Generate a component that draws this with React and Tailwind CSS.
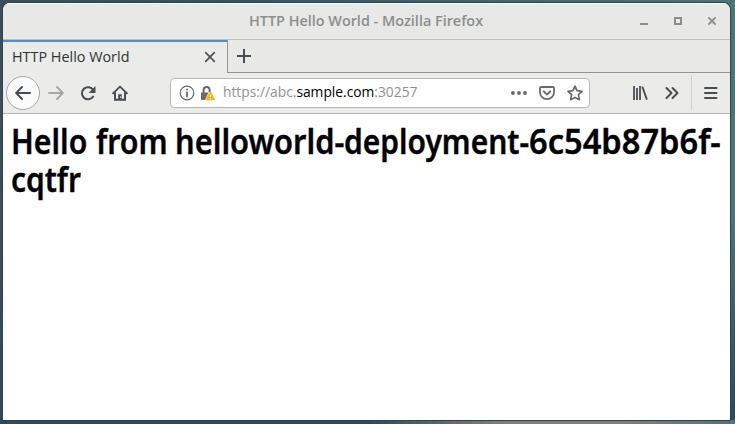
import { useLayoutEffect, useRef, useState } from "react";

// Condenses a line of text horizontally so that it fills the given width.
function Fit({ width, className = "", children }) {
  const ref = useRef(null);
  const [scale, setScale] = useState(1);
  useLayoutEffect(() => {
    setScale(width / ref.current.offsetWidth);
  }, [width]);
  return (
    <span className="block shrink-0" style={{ width }}>
      <span
        ref={ref}
        className={`inline-block origin-left align-top whitespace-nowrap ${className}`}
        style={{ transform: `scaleX(${scale})` }}
      >
        {children}
      </span>
    </span>
  );
}

function Icon({ size = 16, className = "", children }) {
  return (
    <svg
      width={size}
      height={size}
      viewBox={`0 0 ${size} ${size}`}
      fill="none"
      stroke="currentColor"
      strokeWidth="2"
      strokeLinecap="round"
      strokeLinejoin="round"
      className={`block shrink-0 ${className}`}
    >
      {children}
    </svg>
  );
}

function TitleBar() {
  return (
    <div className="flex h-[37px] shrink-0 items-center border-t border-b border-t-[#f8f8f7] border-b-[#bfbfbd] bg-[#e8e8e6] pl-[246px] text-[#8b8e8f]">
      <Fit width={234} className="pb-[2px] text-[15px] leading-[20px] font-semibold">
        HTTP Hello World - Mozilla Firefox
      </Fit>
      <div className="ml-[153px] flex gap-[18px]">
        <Icon className="text-[#8b8e8f]">
          <path d="M4 10h8" strokeLinecap="butt" />
        </Icon>
        <Icon>
          <path d="M5 4h6v6h-6z" strokeLinejoin="miter" />
        </Icon>
        <Icon>
          <path d="M4.4 3.4l7.2 7.2M11.6 3.4l-7.2 7.2" strokeLinecap="butt" />
        </Icon>
      </div>
    </div>
  );
}

function TabBar() {
  return (
    <div className="flex h-[33px] shrink-0 bg-[#e8e8e6]">
      <div className="flex w-[225px] items-center border-t-2 border-r border-t-[#4a90d9] border-r-[#939391] bg-[#ebebea] pl-[9px] text-[#2e3436]">
        <Fit width={117} className="pb-[3px] text-[15px] leading-[20px]">
          HTTP Hello World
        </Fit>
        <Icon className="-mt-[2px] ml-[73px] text-[#4b5255]">
          <path d="M3.7 3.7l8.6 8.6M12.3 3.7l-8.6 8.6" strokeWidth="1.7" />
        </Icon>
      </div>
      <div className="flex flex-1 items-center border-b border-[#939391] pl-[8px] text-[#474e51]">
        <Icon>
          <path d="M8 1v14M1 8h14" strokeLinecap="butt" />
        </Icon>
      </div>
    </div>
  );
}

function UrlBar() {
  return (
    <div className="ml-[42px] flex h-[30px] w-[420px] shrink-0 items-center rounded-[4px] border border-[#b6b6b4] bg-white pl-[8px] text-[#68696b]">
      <Icon>
        <circle cx="8" cy="8" r="6.8" strokeWidth="1.2" />
        <path d="M8 7.3v4.2" strokeWidth="1.8" />
        <circle cx="8" cy="4.6" r="1" fill="currentColor" stroke="none" />
      </Icon>
      <Icon className="ml-[5px]">
        <path d="M3.6 8V5a3 3 0 0 1 6 0v2.2" strokeLinecap="butt" />
        <path d="M1 7.5h7.5L5 15H2a1 1 0 0 1-1-1z" fill="currentColor" stroke="none" />
        <path d="M10.5 7l4.2 7.8H6.3z" fill="#ffb000" stroke="#ffb000" strokeWidth="1" />
        <path d="M10.5 9.4v2.6M10.5 13v1.3" stroke="white" strokeWidth="1.3" strokeLinecap="butt" />
      </Icon>
      <div className="ml-[7px]">
        <Fit width={194} className="text-[15px] leading-[20px] text-[#909293]">
          https://abc.<span className="text-black">sample.com</span>:30257
        </Fit>
      </div>
      <Icon className="ml-[94px]">
        <circle cx="1.9" cy="8" r="1.9" fill="currentColor" stroke="none" />
        <circle cx="8" cy="8" r="1.9" fill="currentColor" stroke="none" />
        <circle cx="14" cy="8" r="1.9" fill="currentColor" stroke="none" />
      </Icon>
      <Icon className="ml-[12px]">
        <path d="M2 2h12a1 1 0 0 1 1 1v4.2a7 7 0 0 1-14 0V3a1 1 0 0 1 1-1z" strokeWidth="1.8" />
        <path d="M4.8 6.5L8 9.6l3.2-3.1" strokeWidth="1.8" />
      </Icon>
      <Icon className="ml-[12px]">
        <path
          d="M8 1.2l2.1 4.5 4.9.6-3.6 3.4 1 5L8 12.4l-4.4 2.3 1-5L1 6.3l4.9-.6z"
          strokeWidth="1.7"
        />
      </Icon>
    </div>
  );
}

function Toolbar() {
  return (
    <div className="flex h-[41px] shrink-0 items-center border-b border-[#b3b3b1] bg-[#ebebea] pl-[3px] text-[#474e51]">
      <div className="flex size-[34px] shrink-0 items-center justify-center rounded-full border border-[#a9a9a7] bg-[#fbfbfb]">
        <Icon>
          <path d="M15 8H1.5M7 2L1.2 8 7 14" />
        </Icon>
      </div>
      <Icon className="ml-[8px] text-[#a5a8a9]">
        <path d="M1 8h13.5M9 2l5.8 6L9 14" />
      </Icon>
      <Icon className="ml-[16px]">
        <path d="M13.2 5A6.1 6.1 0 1 0 13.2 11.5" />
        <path d="M15.5 1v7H8.6z" fill="currentColor" stroke="none" />
      </Icon>
      <Icon className="ml-[16px]">
        <path d="M1 8.4L8 1.6l7 6.8" strokeWidth="1.8" />
        <path d="M3 8v6.8h10V8" strokeLinejoin="miter" />
        <path d="M6.2 9.2h3.6v5.8H6.2z" fill="currentColor" stroke="none" />
        <path d="M8.2 11.3h1v1.6h-1z" fill="#ebebea" stroke="none" />
      </Icon>
      <UrlBar />
      <Icon className="ml-[42px]">
        <path d="M2 1v14M5 3v12M8 1v14M10.3 1.6l4.6 13" strokeWidth="1.8" strokeLinecap="butt" />
      </Icon>
      <Icon className="ml-[16px]">
        <path d="M2.5 3l5 5-5 5M8.5 3l5 5-5 5" />
      </Icon>
      <div className="ml-[11px] flex h-[34px] items-center border-l border-[#d0d0ce] pl-[11px]">
        <Icon>
          <path d="M2 3h11.5M2 8h11.5M2 13h11.5" />
        </Icon>
      </div>
    </div>
  );
}

export default function App() {
  return (
    <div
      className="h-[424px] w-[735px] overflow-hidden bg-[linear-gradient(90deg,#7d807900_50%,#7d8079_68%,#7d8079_85%,#5b6e7d_100%),linear-gradient(180deg,#30475d00_50%,#30475d_100%),linear-gradient(90deg,#3c4d5b_0%,#315560_30%,#4e7474_100%)] bg-[length:100%_4px,100%_100%,100%_100%] bg-bottom bg-no-repeat p-[3px] font-['Open_Sans','Noto_Sans',sans-serif]"
    >
      <div className="flex h-[417px] w-[727px] flex-col overflow-hidden rounded-t-[7px] bg-white shadow-[0_0_0_1px_#2b4653]">
        <TitleBar />
        <TabBar />
        <Toolbar />
        <main className="flex-1 bg-white px-[8px] pt-[8px] font-['Noto_Sans',sans-serif]">
          <h1 className="text-[35px] leading-[38px] font-semibold text-black [-webkit-text-stroke:0.4px_black]">
            <span className="flex">
              <Fit width={76}>Hello</Fit>
              <span className="w-[9px]"> </span>
              <Fit width={72}>from</Fit>
              <span className="w-[7px]"> </span>
              <Fit width={169}>helloworld-</Fit>
              <Fit width={185}>deployment-</Fit>
              <Fit width={192}>6c54b87b6f-</Fit>
            </span>
            <Fit width={70}>cqtfr</Fit>
          </h1>
        </main>
      </div>
    </div>
  );
}
